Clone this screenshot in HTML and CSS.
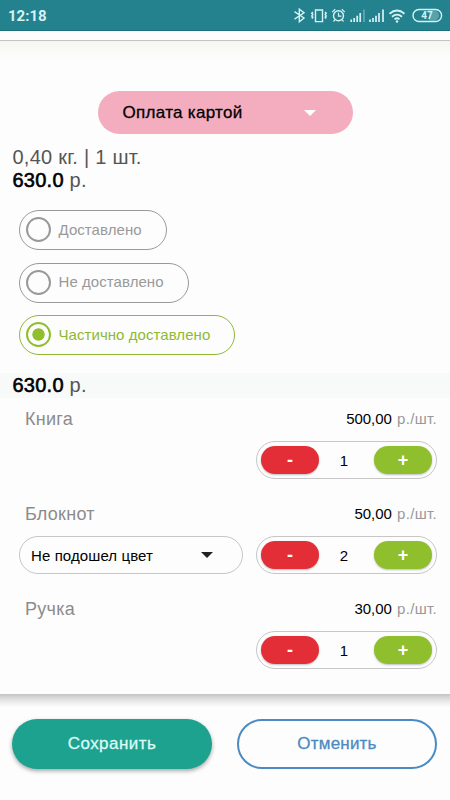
FILE: index.html
```html
<!DOCTYPE html>
<html lang="ru">
<head>
    <meta charset="UTF-8">
    <meta name="viewport" content="width=device-width, initial-scale=1.0">
    <title>Доставка заказа</title>
    <link rel="stylesheet" href="styles.css">
</head>
<body>
    <!-- Строка состояния -->
    <div class="status-bar">
        <span class="status-time">12:18</span>
        <svg class="status-icons" width="152" height="20" viewBox="0 0 152 20" fill="none" stroke="#d5f3f4" stroke-width="1.4">
            <!-- bluetooth -->
            <path d="M2.500 6.700L12 13L7.300 16.800V4.200L12 7.800L2.500 14.200"/>
            <!-- вибрация -->
            <path d="M23.500 5h7v11.600h-7z"/>
            <path d="M20.800 7l-1 1.300l1 1.300l-1 1.300l1 1.300l-1 1.300M33.200 7l1 1.300l-1 1.300l1 1.300l-1 1.300l1 1.300" stroke-width="1.5"/>
            <!-- будильник -->
            <circle cx="46.5" cy="10.8" r="5"/>
            <path d="M46.5 7.700v3.400h3M40.2 7.100l3-2.800M52.8 7.100l-3-2.800M42.8 14.900l-1.300 1.600M50.2 14.900l1.300 1.600" stroke-width="1.2"/>
            <!-- сигнал -->
            <path d="M59.2 17v-2.400M62.2 17v-4M65.2 17v-6.200M68.2 17v-9" stroke-width="1.7"/>
            <path d="M72 17V4.500" stroke="#6cb3bb" stroke-width="1.4"/>
            <path d="M78 17v-2.400M81 17v-4M84 17v-6.200M87 17v-9M91 17V4.500" stroke-width="1.7"/>
            <!-- wifi -->
            <path d="M97.500 8.700Q105 2.300 112.500 8.700M100 11.800Q105 7.500 110 11.800M102.500 14.400Q105 12.200 107.500 14.400" stroke-width="1.8"/>
            <circle cx="105" cy="16.500" r="1.2" fill="#d5f3f4" stroke="none"/>
            <!-- батарея -->
            <path d="M137 5.500h5a5 5 0 0 1 0 10h-5z" fill="#57a2ab" stroke="none"/>
            <rect x="121" y="4.500" width="28.6" height="12" rx="6"/>
            <text x="135" y="14.1" class="battery-text">47</text>
        </svg>
    </div>
    <div class="header-line"></div>

    <div class="order">
        <button class="payment">
            <span>Оплата картой</span>
            <span class="arrow"></span>
        </button>

        <div class="summary">0,40 кг. | 1 шт.<br><b>630.0</b> р.</div>

        <div class="statuses">
            <div class="status"><span class="radio"></span>Доставлено</div>
            <div class="status"><span class="radio"></span>Не доставлено</div>
            <div class="status active"><span class="radio"></span>Частично доставлено</div>
        </div>

        <div class="total"><b>630.0</b> р.</div>

        <!-- Список товаров -->
        <div class="item">
            <div class="item-head">
                <span class="item-name">Книга</span>
                <span class="item-price"><b>500,00</b> р./шт.</span>
            </div>
            <div class="item-controls">
                <div class="counter">
                    <button class="minus">-</button>
                    <span class="count">1</span>
                    <button class="plus">+</button>
                </div>
            </div>
        </div>
        <div class="item">
            <div class="item-head">
                <span class="item-name">Блокнот</span>
                <span class="item-price"><b>50,00</b> р./шт.</span>
            </div>
            <div class="item-controls">
                <div class="reason">
                    <span>Не подошел цвет</span>
                    <span class="arrow"></span>
                </div>
                <div class="counter">
                    <button class="minus">-</button>
                    <span class="count">2</span>
                    <button class="plus">+</button>
                </div>
            </div>
        </div>
        <div class="item">
            <div class="item-head">
                <span class="item-name">Ручка</span>
                <span class="item-price"><b>30,00</b> р./шт.</span>
            </div>
            <div class="item-controls">
                <div class="counter">
                    <button class="minus">-</button>
                    <span class="count">1</span>
                    <button class="plus">+</button>
                </div>
            </div>
        </div>
    </div>

    <!-- Кнопки внизу -->
    <div class="bottom">
        <button class="save">Сохранить</button>
        <button class="cancel">Отменить</button>
    </div>
</body>
</html>
```

FILE: styles.css
```css
* {
    box-sizing: border-box;
}

body {
    margin: 0;
    height: 800px;
    overflow: hidden;
    display: flex;
    flex-direction: column;
    font-family: "Liberation Sans", Arial, sans-serif;
    background: #fdfdfd;
    color: #000;
}

button {
    font-family: inherit;
    border: none;
    padding: 0;
}

.status-bar {
    height: 31px;
    flex-shrink: 0;
    display: flex;
    align-items: center;
    justify-content: space-between;
    padding: 0 6px 0 8px;
    background: #24828f;
    border-bottom: 1px solid #1a717c;
}

.status-time {
    font-family: Roboto, sans-serif;
    font-size: 15px;
    font-weight: bold;
    color: #d5f3f4;
    padding-top: 2px;
}

.battery-text {
    font-family: Roboto, sans-serif;
    font-size: 10px;
    font-weight: bold;
    text-anchor: middle;
    fill: #d5f3f4;
    stroke: none;
}

.header-line {
    height: 10px;
    flex-shrink: 0;
    border-bottom: 1px solid #c4c4c4;
}

.order {
    height: 653px;
    flex-shrink: 0;
    padding-top: 50px;
    background: linear-gradient(#f5f5f3, #fdfdfd 18px);
}

.payment {
    display: flex;
    align-items: center;
    justify-content: space-between;
    width: 255px;
    height: 43px;
    margin: 0 auto;
    padding: 0 37px 0 25px;
    border-radius: 22px;
    background: #f3adbf;
    color: #000;
    font-size: 17px;
    letter-spacing: 0.3px;
    -webkit-text-stroke: 0.3px #000;
}

.arrow {
    border: 6px solid transparent;
    border-top-color: #fff;
    border-bottom: none;
}

.summary,
.total {
    padding-left: 12.5px;
    font-size: 20px;
    letter-spacing: 0.25px;
    line-height: 23px;
    color: #555;
}

.summary {
    margin-top: 12px;
}

.summary b,
.total b {
    font-weight: normal;
    color: #000;
    -webkit-text-stroke: 0.6px #000;
}

.statuses {
    display: flex;
    flex-direction: column;
    align-items: flex-start;
    gap: 12.5px;
    padding: 18px 0 18px 19px;
}

.status {
    display: flex;
    align-items: center;
    gap: 7.5px;
    height: 40px;
    padding: 0 24px 2px 6px;
    border: 1px solid #999;
    border-radius: 20px;
    font-size: 15px;
    letter-spacing: 0.06px;
    color: #999;
}

.radio {
    width: 25px;
    height: 25px;
    margin-top: 1px;
    border: 2.5px solid #999;
    border-radius: 50%;
}

.status.active {
    border-color: #8fb935;
    color: #8fb935;
}

.active .radio {
    border-color: #8fbf2c;
    background: radial-gradient(circle, #8fbf2c 5.8px, transparent 6.5px);
}

.total {
    height: 25px;
    padding-top: 1px;
    background: #f8fafa;
}

.item {
    height: 95px;
    padding: 10px 13px 0 19px;
}

.item-head {
    display: flex;
    justify-content: space-between;
    height: 33px;
    padding-left: 6px;
    line-height: 22px;
}

.item-name {
    font-size: 18px;
    letter-spacing: 0.25px;
    color: #8c8c8c;
}

.item-price {
    font-size: 15px;
    letter-spacing: 0.3px;
    color: #999;
}

.item-price b {
    margin-right: 1px;
    font-weight: normal;
    letter-spacing: -0.1px;
    color: #000;
}

.item-controls {
    display: flex;
    justify-content: flex-end;
    gap: 13px;
}

.reason {
    display: flex;
    align-items: center;
    justify-content: space-between;
    flex: 1;
    height: 38px;
    padding: 0 29px 0 11px;
    border: 1px solid #c6c6c6;
    border-radius: 19px;
    font-size: 15px;
    letter-spacing: 0.1px;
}

.reason .arrow {
    border-top-color: #222;
}

.counter {
    display: flex;
    align-items: center;
    justify-content: space-between;
    width: 181px;
    height: 38px;
    padding: 0 4px;
    border: 1px solid #c6c6c6;
    border-radius: 19px;
    font-size: 15px;
}

.count {
    padding-right: 5px;
}

.counter button {
    width: 58px;
    height: 28px;
    border-radius: 14px;
    color: #fff;
    font-size: 18px;
    font-weight: bold;
    box-shadow: 0 1px 2px rgba(0, 0, 0, 0.25);
}

.minus {
    background: #e32d37;
}

.plus {
    background: #8fbf2c;
}

.bottom {
    flex: 1;
    display: flex;
    align-items: flex-start;
    justify-content: space-between;
    padding: 25px 13px 0 12px;
    background: linear-gradient(#c4c4c4, #e4e4e4 6px, #fdfdfd 13px);
}

.bottom button {
    width: 200px;
    height: 50px;
    border-radius: 25px;
    font-size: 17px;
}

.bottom .save {
    background: #1da28f;
    color: #dcfaf5;
    letter-spacing: 0.45px;
    -webkit-text-stroke: 0.3px #dcfaf5;
    box-shadow: 0 2px 4px rgba(0, 0, 0, 0.35);
}

.bottom .cancel {
    border: 2px solid #4b8bc2;
    background: #fdfdfd;
    color: #4b8bc2;
    letter-spacing: 0.2px;
    -webkit-text-stroke: 0.3px #4b8bc2;
}
```
